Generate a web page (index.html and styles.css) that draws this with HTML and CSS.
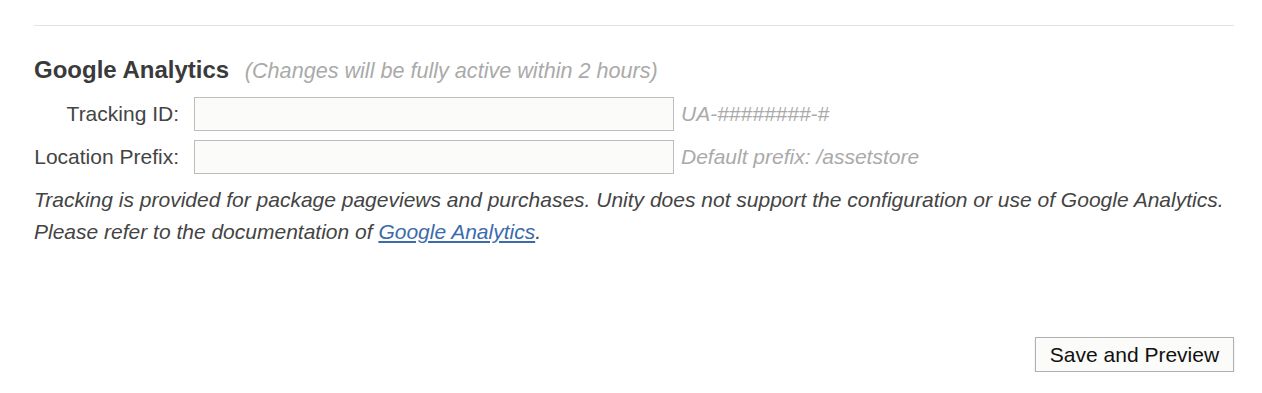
FILE: index.html
```html
<!DOCTYPE html>
<html>
<head>
<meta charset="utf-8">
<link rel="stylesheet" href="styles.css">
</head>
<body>
<div class="page">
  <div class="rule"></div>
  <section class="ga">
    <h2 class="title">Google Analytics <span class="note">(Changes will be fully active within 2 hours)</span></h2>
    <div class="row">
      <label class="label">Tracking ID:</label>
      <input class="field" type="text">
      <span class="hint">UA-########-#</span>
    </div>
    <div class="row">
      <label class="label">Location Prefix:</label>
      <input class="field" type="text">
      <span class="hint">Default prefix: /assetstore</span>
    </div>
    <p class="info">Tracking is provided for package pageviews and purchases. Unity does not support the configuration or use of Google Analytics.<br>Please refer to the documentation of <a href="#" class="link">Google Analytics</a>.</p>
  </section>
  <div class="actions">
    <button class="btn">Save and Preview</button>
  </div>
</div>
</body>
</html>
```
FILE: styles.css
```css
html, body {
  margin: 0;
  padding: 0;
  background: #fff;
}
body {
  font-family: "Liberation Sans", Arial, sans-serif;
  color: #444;
}
.page {
  width: 1200px;
  margin-left: 34px;
  padding-top: 25px;
}
.rule {
  height: 0;
  border-top: 1px solid #e3e3e3;
}
.ga {
  padding-top: 28px;
}
.title {
  margin: 0;
  font-size: 24px;
  font-weight: bold;
  color: #3a3a3a;
  line-height: 32px;
  height: 32px;
}
.note {
  font-size: 21.6px;
  font-weight: normal;
  font-style: italic;
  color: #aaa;
  margin-left: 9px;
}
.row {
  display: flex;
  align-items: center;
  height: 33px;
  margin-top: 10px;
}
.row:first-of-type { margin-top: 11px; }
.label {
  width: 145px;
  text-align: right;
  font-size: 21px;
  color: #444;
  margin-right: 15px;
  white-space: nowrap;
}
.field {
  box-sizing: border-box;
  width: 480px;
  height: 34px;
  border: 1px solid #bdbdbd;
  background: #fbfbfa;
  margin: 0;
  padding: 0 6px;
}
.hint {
  margin-left: 7px;
  font-size: 21px;
  font-style: italic;
  color: #aaa;
}
.info {
  margin: 11px 0 0 0;
  font-size: 21px;
  font-style: italic;
  line-height: 32px;
  color: #444;
}
.link {
  color: #3c6bab;
  text-decoration: underline;
}
.actions {
  display: flex;
  justify-content: flex-end;
  margin-top: 89px;
}
.btn {
  box-sizing: border-box;
  width: 199px;
  height: 35px;
  border: 1px solid #b0b0b0;
  background: #fbfbfa;
  font-family: "Liberation Sans", Arial, sans-serif;
  font-size: 21px;
  color: #111;
  padding: 0;
  box-shadow: 0 1px 2px rgba(0,0,0,0.12);
}
```
